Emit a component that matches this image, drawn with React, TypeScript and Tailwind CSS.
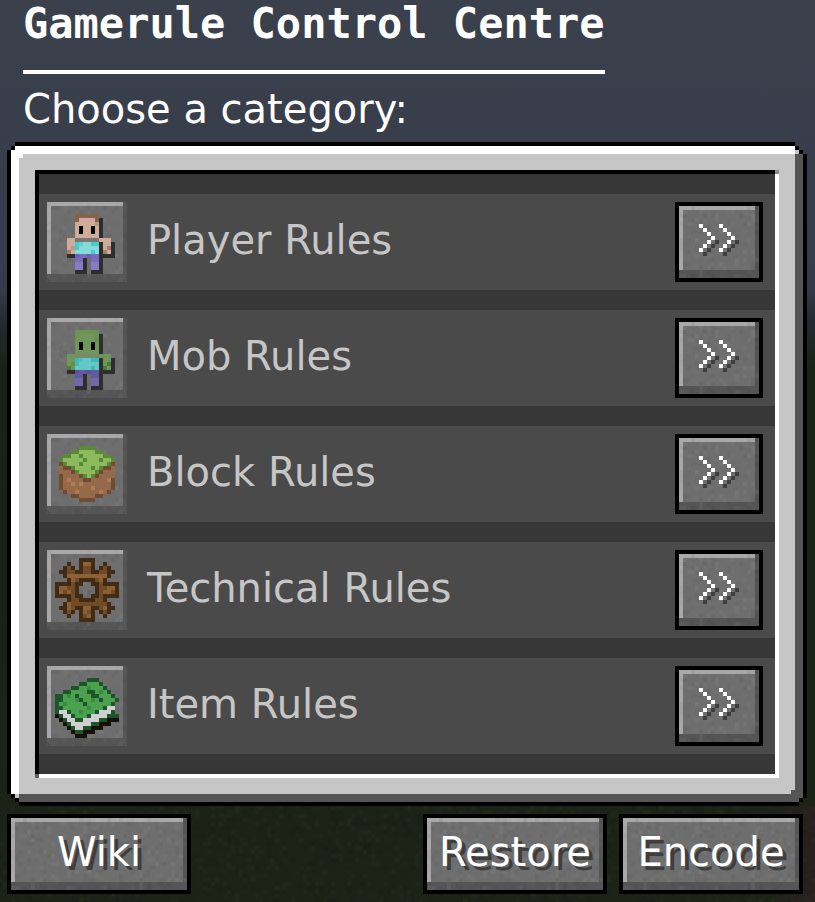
import clsx from 'clsx'

type Palette = Record<string, string>

const STEVE = [
  '................',
  '.....HHHHHH.....',
  '.....HSSSSH#....',
  '.....SSSSSs#....',
  '.....SKSSKS#....',
  '.....SKSSKS#....',
  '.....SSSSSS#....',
  '...SSNNNNNNSSS..',
  '...SSCcTTCC#SS#.',
  '...SsCTTTTT#SD#.',
  '...DSTTTTCT#DS#.',
  '...##pPPpPP####.',
  '.....PP#.PP#....',
  '.....QQ#.QQ#....',
  '.....QQ#.QQ#....',
  '.....###.###....',
]

const GRASS = [
  '................',
  '......gggg......',
  '....ggLLLLgg....',
  '..ggLLgLLLLLgg..',
  '.gLLLLLgLLLgLLg.',
  '.dgLLLgLLLLLLgd.',
  '.bddgLLLLgLgddb.',
  '.bbbdgLLLLgdbbb.',
  '.dbbbbdgLgdbbbb.',
  '.dbBbbbddbbbbBd.',
  '.dbbBbBbbbbbbbd.',
  '.dbbbbbbbBbbbbd.',
  '..dbbBbbbbbBbd..',
  '....ddbbbbdd....',
  '......dddd......',
  '................',
]

const GEAR = [
  '......KKKK......',
  '...K..KBBK..K...',
  '..KbK.KbbK.KbK..',
  '.KKbbKKbbKKbbKK.',
  '..KBBBBBBBBBBK..',
  '...KBbKKKKbBK...',
  'KKKKbKK..KKbKKKK',
  'KBBbbK....KbbBBK',
  'KBbBbK....KbBBbK',
  'KKKKbKK..KKbKKKK',
  '...KbbKKKKbbK...',
  '..KBbbbbbbbbbK..',
  '.KKBbKKBBKKbBKK.',
  '..KbK.KBbK.KbK..',
  '...K..KbBK..K...',
  '......KKKK......',
]

const BOOK = [
  '................',
  '........GGG.....',
  '......GGLLLG....',
  '....GGLLlLLLG...',
  '..GGLLLLGGLlLG..',
  'GGLlLGLLLGGLLLG.',
  'GGLLLlGLLlLGLLLG',
  'GLlLLLLGLLLLLLG.',
  'GGLLLLLLlLLLGWW.',
  'GWWGLLlLLLGWWWG.',
  'KGWWGLLLGWWWWGGG',
  '.KGWWGGWWWWGGKKK',
  '..KGWWWWWGGKKK..',
  '...KGWWGGKKK....',
  '....KGGKKK......',
  '.....KKK........',
]

const stevePalette: Palette = {
  H: '#836448', S: '#ceab9a', s: '#bd9886', K: '#000000', N: '#7b7470', C: '#43cfc8', c: '#62d4d0',
  T: '#83dcd9', D: '#a37f6a', P: '#776bbd', p: '#6c61b0', Q: '#877bc9', '#': '#2e2e2e',
}

const zombiePalette: Palette = {
  H: '#6b9353', S: '#71965a', s: '#658b4d', K: '#000000', N: '#76896b', C: '#3fbab7', c: '#51c0bf',
  T: '#62c9c8', D: '#4f7740', P: '#6259a0', p: '#5a5197', Q: '#7167ae', '#': '#2e2e2e',
}

const grassPalette: Palette = { g: '#5b8a37', L: '#8cba5c', d: '#6f4b32', b: '#966a48', B: '#ad7b56' }
const gearPalette: Palette = { K: '#422b15', B: '#8d6134', b: '#704b25' }
const bookPalette: Palette = { G: '#1d5429', L: '#4aa14e', l: '#3a8c40', W: '#d0d0d0', K: '#171008' }

const categories = [
  { name: 'Player Rules', art: STEVE, palette: stevePalette },
  { name: 'Mob Rules', art: STEVE, palette: zombiePalette },
  { name: 'Block Rules', art: GRASS, palette: grassPalette },
  { name: 'Technical Rules', art: GEAR, palette: gearPalette },
  { name: 'Item Rules', art: BOOK, palette: bookPalette },
]

function PixelArt({ art, palette }: { art: string[]; palette: Palette }) {
  return (
    <svg viewBox="0 0 16 16" className="relative w-16 h-16" shapeRendering="crispEdges" aria-hidden="true">
      {art.flatMap((row, y) =>
        row.split('').map((key, x) =>
          palette[key] ? <rect key={`${x}-${y}`} x={x} y={y} width="1" height="1" fill={palette[key]} /> : null
        )
      )}
    </svg>
  )
}

// Deterministic noise, so every render gives the same speckles
function speckles(cols: number, rows: number, seed: number) {
  let n = seed
  const next = () => {
    n = (n * 1664525 + 1013904223) % 4294967296
    return n / 4294967296
  }
  const cells: { x: number; y: number; light: boolean; opacity: number }[] = []
  for (let y = 0; y < rows; y++) {
    for (let x = 0; x < cols; x++) {
      if (next() < 0.4) cells.push({ x, y, light: next() > 0.5, opacity: next() * 0.05 })
    }
  }
  return cells
}

function Texture({ cols, rows, seed = 7, light = '#ffffff' }: { cols: number; rows: number; seed?: number; light?: string }) {
  return (
    <svg
      className="absolute left-0 top-0 pointer-events-none"
      width={cols * 4}
      height={rows * 4}
      viewBox={`0 0 ${cols} ${rows}`}
      shapeRendering="crispEdges"
      aria-hidden="true"
    >
      {speckles(cols, rows, seed).map((c) => (
        <rect key={`${c.x}-${c.y}`} x={c.x} y={c.y} width="1" height="1" fill={c.light ? light : '#000000'} opacity={c.opacity} />
      ))}
    </svg>
  )
}

// Bevel edges of a stone slab
function Bevel() {
  return (
    <>
      <span className="absolute inset-x-0 bottom-0 h-2 bg-[#555555]" />
      <span className="absolute inset-y-0 right-0 w-1 bg-[#555555]" />
      <span className="absolute left-0 top-0 right-1 h-1 bg-[#a8a8a8]" />
      <span className="absolute left-0 top-0 bottom-2 w-1 bg-[#a8a8a8]" />
    </>
  )
}

function StoneButton({ label, className, children }: { label?: string; className?: string; children: React.ReactNode }) {
  return (
    <button
      type="button"
      aria-label={label}
      className={clsx(
        'relative h-20 shrink-0 overflow-hidden border-4 border-black bg-[#6e6e6e] text-[40px] leading-none text-white [text-shadow:4px_4px_0_#3e3e3e] cursor-pointer',
        className
      )}
    >
      <Bevel />
      <Texture cols={44} rows={18} />
      <span className="relative flex h-full items-center justify-center pb-1">{children}</span>
    </button>
  )
}

function Chevrons() {
  const steps = [
    [0, 0], [1, 1], [2, 2], [3, 3], [2, 4], [1, 5], [0, 6],
  ]
  const arrow = (dx: number, dy: number, fill: string) =>
    steps.map(([x, y]) => <rect key={`${dx}-${dy}-${y}`} x={x + dx} y={y + dy} width="1" height="1" fill={fill} />)
  return (
    <svg viewBox="0 0 10 8" className="w-10 h-8" shapeRendering="crispEdges" aria-hidden="true">
      {arrow(1, 1, '#3e3e3e')}
      {arrow(6, 1, '#3e3e3e')}
      {arrow(0, 0, '#ffffff')}
      {arrow(5, 0, '#ffffff')}
    </svg>
  )
}

export default function App() {
  return (
    <main className="relative min-h-screen overflow-hidden bg-[linear-gradient(to_bottom,#3a404c_0px,#353b48_290px,#252b30_320px,#1b2115_370px,#1e2318_100%)] pl-[7px] pr-2 font-['DejaVu_Sans',sans-serif] text-white">
      {/* Title */}
      <header className="px-4">
        <h1 className="w-fit border-b-4 border-white pt-1 pb-[26px] font-['DejaVu_Sans_Mono',monospace] text-[42px] leading-10 font-bold">
          Gamerule Control Centre
        </h1>
        <p className="mt-2.5 text-[40px] leading-[50px]">Choose a category:</p>
      </header>

      {/* Category panel */}
      <section className="mt-2 bg-black p-1 [clip-path:polygon(8px_0,calc(100%-12px)_0,calc(100%-12px)_4px,calc(100%-8px)_4px,calc(100%-8px)_8px,calc(100%-4px)_8px,calc(100%-4px)_12px,100%_12px,100%_calc(100%-8px),calc(100%-4px)_calc(100%-8px),calc(100%-4px)_calc(100%-4px),calc(100%-8px)_calc(100%-4px),calc(100%-8px)_100%,12px_100%,12px_calc(100%-4px),8px_calc(100%-4px),8px_calc(100%-8px),4px_calc(100%-8px),4px_calc(100%-12px),0_calc(100%-12px),0_8px,4px_8px,4px_4px,8px_4px)]">
        <div className="relative border-8 border-t-white border-l-white border-r-[#555555] border-b-[#555555] bg-[#c6c6c6] p-4 [clip-path:polygon(4px_0,calc(100%-8px)_0,calc(100%-8px)_4px,calc(100%-4px)_4px,calc(100%-4px)_8px,100%_8px,100%_calc(100%-4px),calc(100%-4px)_calc(100%-4px),calc(100%-4px)_100%,8px_100%,8px_calc(100%-4px),4px_calc(100%-4px),4px_calc(100%-8px),0_calc(100%-8px),0_4px,4px_4px)]">
          <span className="absolute left-0 top-0 size-1 bg-white" />
          <span className="absolute right-0 bottom-0 size-1 bg-[#555555]" />
          <span className="absolute -right-1 -top-1 size-1 bg-[#c6c6c6]" />
          <span className="absolute -left-1 -bottom-1 size-1 bg-[#c6c6c6]" />
          <div className="relative border-4 border-t-black border-l-black border-r-white border-b-white bg-[#373737] py-5">
            <span className="absolute -right-1 -top-1 size-1 bg-[#8b8b8b]" />
            <span className="absolute -left-1 -bottom-1 size-1 bg-[#606060]" />
            <ul className="flex flex-col gap-5">
              {categories.map((category) => (
                <li key={category.name} className="flex items-center bg-[#4a4a4a] py-2 pl-2 pr-3">
                  <span className="relative flex size-20 shrink-0 items-center justify-center overflow-hidden bg-[#6e6e6e]">
                    <Bevel />
                    <Texture cols={20} rows={20} seed={23} />
                    <PixelArt art={category.art} palette={category.palette} />
                  </span>
                  <span className="grow pb-1 pl-5 text-[40px] leading-none text-[#c6c6c6]">{category.name}</span>
                  <StoneButton label={`Open ${category.name}`} className="w-[88px]">
                    <Chevrons />
                  </StoneButton>
                </li>
              ))}
            </ul>
          </div>
        </div>
      </section>

      {/* Actions */}
      <footer className="relative py-2 pr-1">
        <div className="absolute -inset-x-2 inset-y-0 overflow-hidden bg-linear-to-r from-transparent from-95% to-[#2a201f]">
          <Texture cols={208} rows={24} seed={91} light="#7a9a3a" />
        </div>
        <div className="relative flex gap-3">
          <StoneButton className="mr-auto w-[184px]">Wiki</StoneButton>
          <StoneButton className="w-[184px]">Restore</StoneButton>
          <StoneButton className="w-[184px]">Encode</StoneButton>
        </div>
      </footer>
    </main>
  )
}
